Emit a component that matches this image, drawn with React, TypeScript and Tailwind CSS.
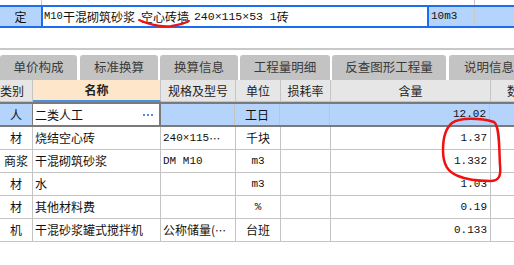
const TABS = [
  { label: "单价构成", w: "w-[77px]" },
  { label: "标准换算", w: "w-[78px] ml-[3px]" },
  { label: "换算信息", w: "w-[78px] ml-[2px]" },
  { label: "工程量明细", w: "w-[90px] ml-[2px]" },
  { label: "反查图形工程量", w: "w-[114px] ml-[2px]" },
  { label: "说明信息", w: "w-[80px] ml-[3px]" },
];

const ROWS = [
  { type: "材", name: "烧结空心砖", spec: "240×115", more: true, unit: "千块", qty: "1.37" },
  { type: "商浆", name: "干混砌筑砂浆", spec: "DM M10", unit: "m3", qty: "1.332" },
  { type: "材", name: "水", spec: "", unit: "m3", qty: "1.03" },
  { type: "材", name: "其他材料费", spec: "", unit: "%", qty: "0.19" },
  { type: "机", name: "干混砂浆罐式搅拌机", spec: "公称储量(", more: true, cjkSpec: true, unit: "台班", qty: "0.133" },
];

const cjk = "font-['Noto_Sans_CJK_SC',sans-serif]";
const mono = "font-['Liberation_Mono','Noto_Sans_CJK_SC',monospace]";

export default function App() {
  return (
    <div className={`relative w-[514px] h-[265px] overflow-hidden bg-white text-[12px] leading-none text-[#111] ${cjk}`}>
      {/* top quota row */}
      <div className="flex h-[5px]">
        <div className="w-[42px] border-r border-[#c8c8c8]" />
        <div className="w-[433px] border-r border-[#c8c8c8]" />
      </div>
      <div className="flex h-[23px] border-y-2 border-[#1a6ef2] bg-[#b4d4fc]">
        <div className="w-[41px] flex items-center justify-center">定</div>
        <div className="w-[388px] flex items-center border-x-2 border-[#1a6ef2] bg-white pl-[1px] whitespace-pre">
          <span className={`${mono} text-[10.5px]`}>M10</span>
          <span>干混砌筑砂浆</span>
          <span className="ml-[6px]">空心砖墙</span>
          <span className={`${mono} text-[11.5px] ml-[5px]`}>240×115×53 1</span>
          <span>砖</span>
        </div>
        <div className={`w-[46px] flex items-center border-r border-[#c8c8c8] pl-[2px] text-[11px] ${mono}`}>10m3</div>
        <div className="flex-1" />
      </div>

      <div className="h-[20px]" />
      <div className="h-[2px] bg-[#c8c8c8]" />
      <div className="h-[5px]" />

      {/* tabs */}
      <div className="flex h-[25px]">
        {TABS.map((t) => (
          <div
            key={t.label}
            className={`${t.w} shrink-0 flex items-center justify-center rounded-t-[3px] bg-[#c3c3c3] text-[#3a3a3a] text-[12.5px]`}
          >
            {t.label}
          </div>
        ))}
      </div>

      {/* header */}
      <div className="flex h-[22px] bg-[#e6e6e6] text-[#222]">
        <div className="w-[33px] shrink-0 flex items-center border-r border-[#c4c4c4] border-b border-b-[#c4c4c4]">类别</div>
        <div className="w-[128px] shrink-0 flex items-center justify-center border-r border-[#c4c4c4] border-b-2 border-b-[#4a90e2] bg-[#fde6c9] font-bold">名称</div>
        <div className="w-[75px] shrink-0 flex items-center justify-center border-r border-[#c4c4c4] border-b border-b-[#c4c4c4]">规格及型号</div>
        <div className="w-[45px] shrink-0 flex items-center justify-center border-r border-[#c4c4c4] border-b border-b-[#c4c4c4]">单位</div>
        <div className="w-[50px] shrink-0 flex items-center justify-center border-r border-[#c4c4c4] border-b border-b-[#c4c4c4]">损耗率</div>
        <div className="w-[160px] shrink-0 flex items-center justify-center border-r border-[#c4c4c4] border-b border-b-[#c4c4c4]">含量</div>
        <div className="flex-1 flex items-center pl-[16px] border-b border-b-[#c4c4c4] whitespace-nowrap">数量</div>
      </div>

      {/* selected row */}
      <div className="flex h-[25px] border-y-2 border-[#7a7a7a] bg-[#b4d4fc]">
        <div className="w-[33px] shrink-0 flex items-center justify-center border-r border-[#7a7a7a]">人</div>
        <div className="w-[128px] shrink-0 flex items-center justify-between bg-white pl-[2px] pr-[6px] border-r-2 border-[#7a7a7a]">
          <span>二类人工</span>
          <span className="flex gap-[2px] pt-[1px]">
            <span className="w-[2px] h-[2px] bg-[#4a8fd8]" />
            <span className="w-[2px] h-[2px] bg-[#4a8fd8]" />
            <span className="w-[2px] h-[2px] bg-[#4a8fd8]" />
          </span>
        </div>
        <div className="w-[74px] shrink-0 border-r border-[#c4c4c4]" />
        <div className="w-[45px] shrink-0 flex items-center justify-center border-r border-[#c4c4c4]">工日</div>
        <div className="w-[50px] shrink-0 border-r border-[#c4c4c4]" />
        <div className={`w-[160px] shrink-0 flex items-center justify-end pr-[3px] border-r border-[#c4c4c4] text-[11px] ${mono}`}>12.02</div>
        <div className="flex-1" />
      </div>

      {ROWS.map((r, i) => (
        <div key={i} className="flex h-[23px] border-b border-[#c4c4c4]">
          <div className="w-[33px] shrink-0 flex items-center justify-center border-r border-[#c4c4c4]">{r.type}</div>
          <div className="w-[128px] shrink-0 flex items-center pl-[2px] border-r border-[#c4c4c4]">{r.name}</div>
          <div className="w-[75px] shrink-0 flex items-center pl-[2px] border-r border-[#c4c4c4] whitespace-nowrap">
            <span className={r.cjkSpec ? "" : `${mono} text-[11px]`}>{r.spec}</span>
            {r.more && <span className="text-[11px] tracking-[-1px]">⋯</span>}
          </div>
          <div className={`w-[45px] shrink-0 flex items-center justify-center border-r border-[#c4c4c4] ${r.unit === "m3" || r.unit === "%" ? `${mono} text-[11px]` : ""}`}>
            {r.unit}
          </div>
          <div className="w-[50px] shrink-0 border-r border-[#c4c4c4]" />
          <div className={`w-[160px] shrink-0 flex items-center justify-end pr-[3px] border-r border-[#c4c4c4] text-[11px] ${mono}`}>{r.qty}</div>
          <div className="flex-1" />
        </div>
      ))}

      {/* hand-drawn red annotations */}
      <svg className="pointer-events-none absolute inset-0" width="514" height="265" viewBox="0 0 514 265" fill="none">
        <path d="M139 20 C 148 24, 160 27, 171 26 C 179 25, 185 23, 189 21" stroke="#f01010" strokeWidth="2" strokeLinecap="round" />
        <path
          d="M452 123 C 460 117, 481 118, 494 122 C 500 126, 499 150, 500 165 C 501 175, 500 181, 490 181 C 478 181, 465 179, 458 176 C 448 172, 443 165, 443 150 C 443 138, 446 128, 452 123"
          stroke="#f01010"
          strokeWidth="2.5"
          strokeLinecap="round"
        />
      </svg>
    </div>
  );
}
